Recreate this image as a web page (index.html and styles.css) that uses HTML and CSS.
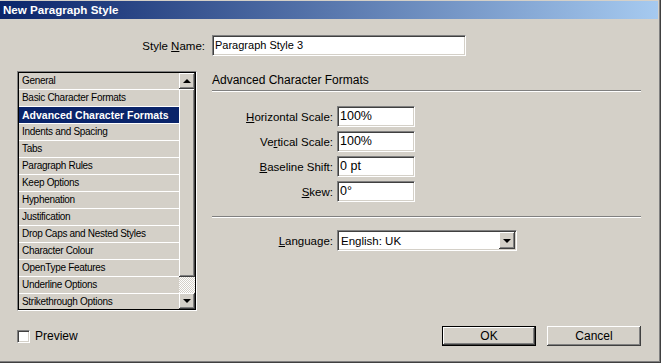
FILE: index.html
```html
<!DOCTYPE html>
<html lang="en">
<head>
  <meta charset="UTF-8">
  <title>New Paragraph Style</title>
  <link rel="stylesheet" href="styles.css">
</head>
<body>
  <div class="dialog">
    <div class="titlebar">New Paragraph Style</div>
    <div class="content">
      <div class="name-row">
        <span class="name-label">Style <u>N</u>ame:</span>
        <div class="field name-field">Paragraph Style 3</div>
      </div>

      <div class="main">
        <div class="listbox">
          <ul class="list">
            <li>General</li>
            <li>Basic Character Formats</li>
            <li class="selected">Advanced Character Formats</li>
            <li>Indents and Spacing</li>
            <li>Tabs</li>
            <li>Paragraph Rules</li>
            <li>Keep Options</li>
            <li>Hyphenation</li>
            <li>Justification</li>
            <li>Drop Caps and Nested Styles</li>
            <li>Character Colour</li>
            <li>OpenType Features</li>
            <li>Underline Options</li>
            <li>Strikethrough Options</li>
          </ul>
          <div class="scrollbar">
            <div class="sb-btn"><span class="arrow-up"></span></div>
            <div class="sb-thumb"></div>
            <div class="sb-track"></div>
            <div class="sb-btn"><span class="arrow-down"></span></div>
          </div>
        </div>

        <div class="panel">
          <div class="panel-title">Advanced Character Formats</div>
          <div class="form-rows">
            <div class="row">
              <span class="label"><u>H</u>orizontal Scale:</span>
              <div class="field small">100%</div>
            </div>
            <div class="row">
              <span class="label">Ve<u>r</u>tical Scale:</span>
              <div class="field small">100%</div>
            </div>
            <div class="row">
              <span class="label"><u>B</u>aseline Shift:</span>
              <div class="field small">0 pt</div>
            </div>
            <div class="row">
              <span class="label"><u>S</u>kew:</span>
              <div class="field small">0°</div>
            </div>
          </div>
          <div class="rule"></div>
          <div class="row lang-row">
            <span class="label"><u>L</u>anguage:</span>
            <div class="field select">
              <span class="select-text">English: UK</span>
              <div class="sb-btn drop"><span class="arrow-down"></span></div>
            </div>
          </div>
        </div>
      </div>

      <div class="footer">
        <span class="checkbox"></span>
        <span class="check-label">Preview</span>
        <div class="buttons">
          <button class="btn default">OK</button>
          <button class="btn">Cancel</button>
        </div>
      </div>
    </div>
  </div>
</body>
</html>
```

FILE: styles.css
```css
body, html {
  margin: 0;
  padding: 0;
  background-color: #d4d0c8;
  font-family: "Liberation Sans", Arial, sans-serif;
  color: #000;
}
.dialog {
  width: 661px;
  height: 363px;
  box-sizing: border-box;
  background-color: #d4d0c8;
  box-shadow: inset -1px -1px 0 #404040, inset -2px -2px 0 #808080;
  overflow: hidden;
}
.titlebar {
  height: 18px;
  margin: 1px 3px 0 0;
  padding-left: 3px;
  background: linear-gradient(to right, #0a246a, #a6caf0);
  color: white;
  font-weight: bold;
  font-size: 11.6px;
  line-height: 18px;
}
.content {
  padding: 0 20px 0 17px;
}

/* sunken edit fields */
.field {
  box-sizing: border-box;
  height: 21px;
  background: #fff;
  border: 1px solid;
  border-color: #808080 #fff #fff #808080;
  box-shadow: inset 1px 1px 0 #404040, inset -1px -1px 0 #d4d0c8;
  padding-left: 2px;
  font-size: 12.5px;
  line-height: 19px;
  white-space: nowrap;
}
.name-row {
  display: flex;
  align-items: center;
  margin-top: 16px;
  font-size: 11.5px;
}
.name-label {
  width: 188px;
  padding-right: 7px;
  text-align: right;
}
.name-field {
  width: 254px;
  font-size: 11px;
}

.main {
  display: flex;
  gap: 15px;
  margin-top: 15px;
}

/* list box */
.listbox {
  display: flex;
  width: 180px;
  height: 240px;
  box-sizing: border-box;
  border: 1px solid;
  border-color: #808080 #fff #fff #808080;
  padding: 1px;
  box-shadow: inset 0 0 0 1px #000;
  overflow: hidden;
}
.list {
  list-style: none;
  margin: 0;
  padding: 0;
  width: 160px;
  overflow: hidden;
}
.list li {
  height: 16px;
  border-bottom: 1px solid #fff;
  padding-left: 3px;
  font-size: 10px;
  letter-spacing: -0.3px;
  line-height: 16px;
  white-space: nowrap;
}
.list li.selected {
  background-color: #0a246a;
  color: #fff;
  font-weight: bold;
  font-size: 10.5px;
  letter-spacing: 0;
}
.scrollbar {
  width: 16px;
  display: flex;
  flex-direction: column;
}
.sb-btn,
.sb-thumb {
  box-sizing: border-box;
  background: #d4d0c8;
  box-shadow: inset -1px -1px 0 #404040, inset 1px 1px 0 #fff, inset -2px -2px 0 #808080;
}
.sb-btn {
  width: 16px;
  height: 16px;
  display: flex;
  align-items: center;
  justify-content: center;
}
.sb-thumb {
  height: 188px;
}
.sb-track {
  height: 16px;
  background-color: #d4d0c8;
  background-image: repeating-conic-gradient(#fff 0 25%, #d4d0c8 0 50%);
  background-size: 2px 2px;
}
.arrow-up,
.arrow-down {
  width: 0;
  height: 0;
  border-left: 4px solid transparent;
  border-right: 4px solid transparent;
}
.arrow-up {
  border-bottom: 4px solid #000;
}
.arrow-down {
  border-top: 4px solid #000;
}

/* right panel */
.panel {
  flex: 1;
}
.panel-title {
  height: 19px;
  line-height: 18px;
  font-size: 12px;
  border-bottom: 1px solid #808080;
  box-shadow: 0 1px 0 #fff;
}
.form-rows {
  display: flex;
  flex-direction: column;
  gap: 4px;
  margin-top: 15px;
}
.row {
  display: flex;
  align-items: center;
  font-size: 11.5px;
}
.label {
  width: 121px;
  padding-right: 4px;
  text-align: right;
}
.field.small {
  width: 78px;
}
.rule {
  margin-top: 14px;
  border-top: 1px solid #808080;
  box-shadow: 0 1px 0 #fff;
}
.lang-row {
  margin-top: 13px;
}
.select {
  display: flex;
  width: 180px;
  padding: 1px;
  font-size: 11.5px;
}
.select-text {
  flex: 1;
  padding-left: 2px;
}
.sb-btn.drop {
  height: 17px;
}

/* footer */
.footer {
  display: flex;
  align-items: center;
  margin-top: 15px;
  height: 20px;
  font-size: 12px;
}
.checkbox {
  width: 13px;
  height: 13px;
  box-sizing: border-box;
  background: #fff;
  border: 1px solid;
  border-color: #808080 #fff #fff #808080;
  box-shadow: inset 1px 1px 0 #404040, inset -1px -1px 0 #d4d0c8;
}
.check-label {
  margin-left: 5px;
}
.buttons {
  margin-left: auto;
  display: flex;
  gap: 11px;
}
.btn {
  width: 94px;
  height: 20px;
  box-sizing: border-box;
  background: #d4d0c8;
  border: none;
  font-family: inherit;
  font-size: 12px;
  padding: 0;
  box-shadow: inset -1px -1px 0 #404040, inset 1px 1px 0 #fff, inset -2px -2px 0 #808080;
}
.btn.default {
  border: 1px solid #000;
}
```
